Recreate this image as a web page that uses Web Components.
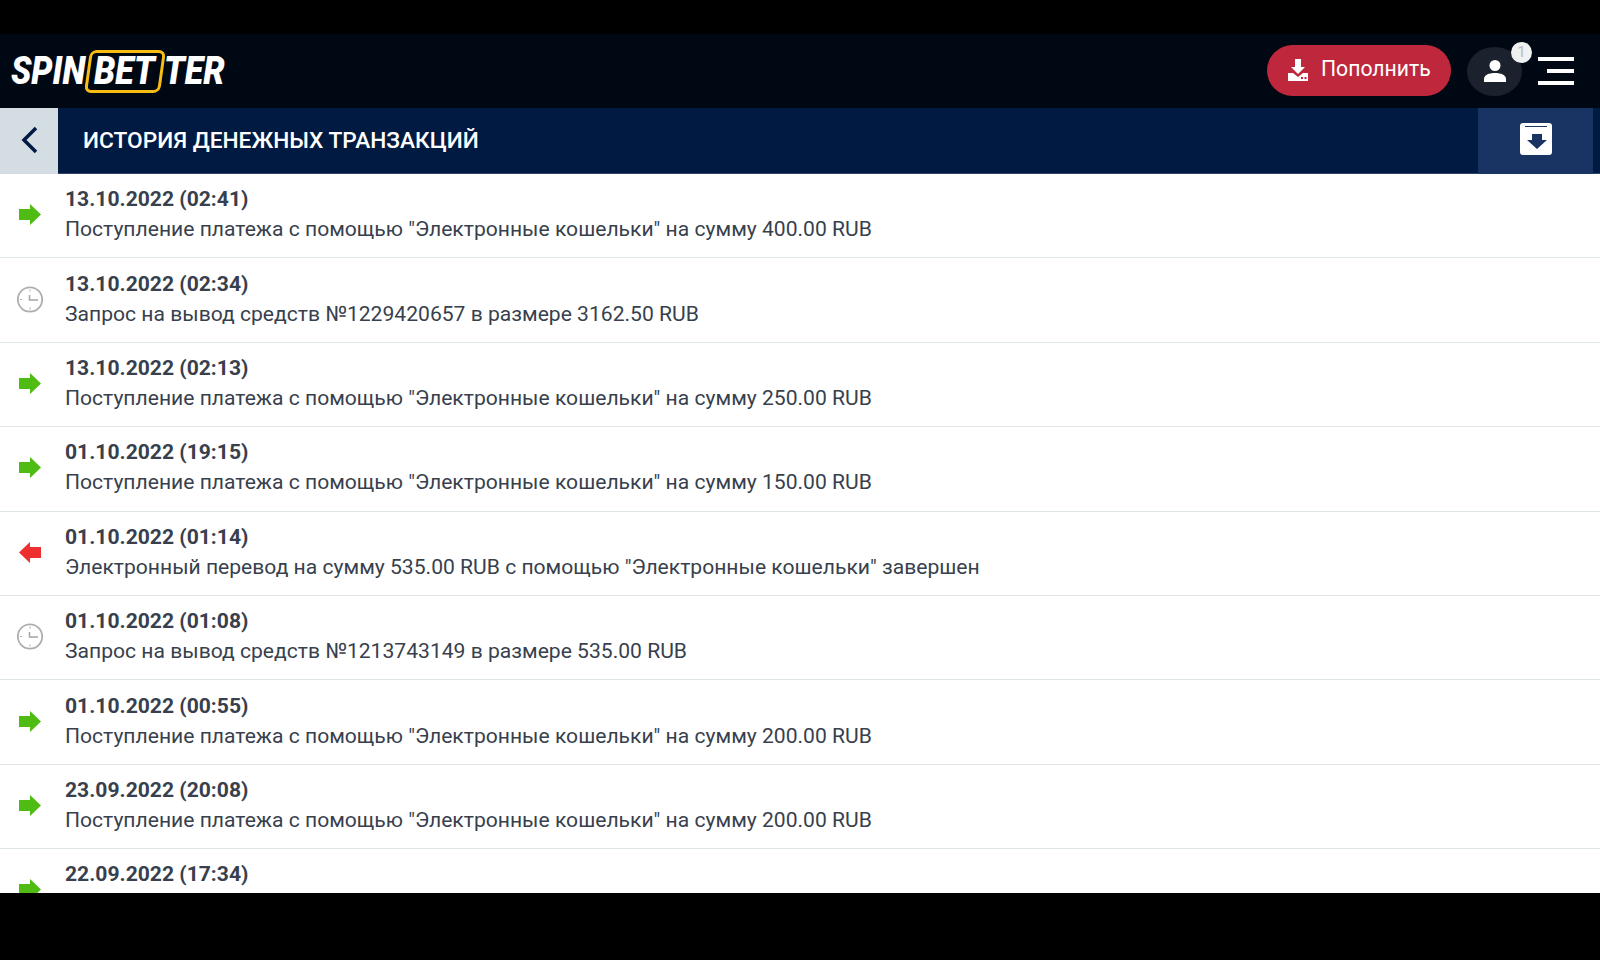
<!DOCTYPE html>
<html lang="ru">
<head>
<meta charset="utf-8">
<title>История</title>
<style>
  html, body { margin: 0; height: 960px; background: #000; overflow: hidden; }
  body { display: flex; flex-direction: column; padding-top: 34px; box-sizing: border-box; font-family: Roboto, "Liberation Sans", sans-serif; }
</style>
</head>
<body>
  <top-bar></top-bar>
  <title-bar>ИСТОРИЯ ДЕНЕЖНЫХ ТРАНЗАКЦИЙ</title-bar>
  <tx-list>
    <tx-row kind="in" date="13.10.2022 (02:41)">Поступление платежа с помощью "Электронные кошельки" на сумму 400.00 RUB</tx-row>
    <tx-row kind="wait" date="13.10.2022 (02:34)">Запрос на вывод средств №1229420657 в размере 3162.50 RUB</tx-row>
    <tx-row kind="in" date="13.10.2022 (02:13)">Поступление платежа с помощью "Электронные кошельки" на сумму 250.00 RUB</tx-row>
    <tx-row kind="in" date="01.10.2022 (19:15)">Поступление платежа с помощью "Электронные кошельки" на сумму 150.00 RUB</tx-row>
    <tx-row kind="out" date="01.10.2022 (01:14)">Электронный перевод на сумму 535.00 RUB с помощью "Электронные кошельки" завершен</tx-row>
    <tx-row kind="wait" date="01.10.2022 (01:08)">Запрос на вывод средств №1213743149 в размере 535.00 RUB</tx-row>
    <tx-row kind="in" date="01.10.2022 (00:55)">Поступление платежа с помощью "Электронные кошельки" на сумму 200.00 RUB</tx-row>
    <tx-row kind="in" date="23.09.2022 (20:08)">Поступление платежа с помощью "Электронные кошельки" на сумму 200.00 RUB</tx-row>
    <tx-row kind="in" date="22.09.2022 (17:34)"></tx-row>
  </tx-list>

<script>
// шапка: логотип, кнопка пополнения, профиль, меню
class TopBar extends HTMLElement {
  constructor() {
    super();
    this.attachShadow({ mode: 'open' });
    this.shadowRoot.innerHTML = `
      <style>
        :host { display: flex; align-items: center; height: 74px; background: #000814; flex: none; }
        .logo { display: flex; align-items: center; width: 224px; color: #fff; font: italic 900 39px/1 Roboto, sans-serif; }
        .logo span { display: block; white-space: nowrap; transform-origin: left center; }
        .spin { flex: none; width: 76px; margin-left: 11px; transform: scaleX(.86); }
        .mid { flex: none; width: 70px; height: 37px; border: 3px solid #f8bd13; border-radius: 7px; transform: skewX(-8deg); display: flex; align-items: center; }
        .mid span { margin-left: 4px; transform: skewX(8deg) scaleX(.87); }
        .ter { flex: none; width: 58px; margin-left: 1px; transform: scaleX(.87); }
        .pay { display: flex; align-items: center; margin: 0 0 1px auto; width: 184px; height: 51px; box-sizing: border-box; padding: 0 0 4px 21px; background: #bf283c; border-radius: 26px; color: #fff; font-size: 21.200px; gap: 13px; }
        .pay svg { margin-top: 2px; }
        .user { position: relative; width: 55px; height: 49px; margin-left: 16px; background: #1b222d; border-radius: 50%; display: flex; align-items: center; justify-content: center; }
        .badge { position: absolute; top: -5px; right: -10px; width: 21px; height: 21px; border-radius: 50%; background: #f0f1f3; color: #b5bac2; font-size: 15px; line-height: 21px; text-align: center; }
        .menu { display: flex; flex-direction: column; align-items: flex-end; gap: 8px; width: 36px; margin: 0 26px 0 16px; }
        .menu i { display: block; height: 4px; background: #fff; width: 36px; }
        .menu i:nth-child(2) { width: 27px; }
      </style>
      <div class="logo"><span class="spin">SPIN</span><div class="mid"><span>BET</span></div><span class="ter">TER</span></div>
      <div class="pay">
        <svg width="20" height="22" viewBox="0 0 20 22"><path fill="#fff" d="M7 0h6v8h4l-7 7-7-7h4z"/><path fill="#fff" d="M0 14h5l5 4 5-4h5v8H0z"/><path fill="#bf283c" d="M13 18h2v2h-2zM16.500 18h2v2h-2z"/></svg>
        Пополнить
      </div>
      <div class="user">
        <svg width="24" height="24" viewBox="0 0 24 24" fill="#fff"><circle cx="12" cy="6.500" r="5.500"/><path d="M1 23v-3c0-4 5-6 11-6s11 2 11 6v3z"/></svg>
        <div class="badge">1</div>
      </div>
      <div class="menu"><i></i><i></i><i></i></div>
    `;
  }
}

// синяя полоса с заголовком
class TitleBar extends HTMLElement {
  constructor() {
    super();
    this.attachShadow({ mode: 'open' });
    this.shadowRoot.innerHTML = `
      <style>
        :host { display: flex; height: 66px; background: #011a42; flex: none; box-shadow: inset 0 -1px 0 #2f4468; }
        .back { width: 58px; background: #d3dde2; display: flex; align-items: center; justify-content: center; }
        .title { flex: 1; align-self: center; margin: 0 0 2px 25px; color: #fff; font-size: 22.700px; font-weight: 500; }
        .archive { width: 115px; margin-right: 7px; background: #193363; display: flex; align-items: center; justify-content: center; }
        .archive svg { margin-bottom: 4px; }
        .back svg { margin-bottom: 2px; }
      </style>
      <div class="back">
        <svg width="19" height="28" viewBox="0 0 19 28" fill="none" stroke="#011a42" stroke-width="3.500"><path d="M16 2 4 14l12 12"/></svg>
      </div>
      <div class="title"><slot></slot></div>
      <div class="archive">
        <svg width="32" height="32" viewBox="0 0 32 32"><rect width="32" height="32" rx="3" fill="#fff"/><path fill="#193363" d="M5 3h22v1H5zM12 11h10v6h5l-10 9-10-9h5z"/></svg>
      </div>
    `;
  }
}

class TxList extends HTMLElement {
  constructor() {
    super();
    this.attachShadow({ mode: 'open' });
    this.shadowRoot.innerHTML = `
      <style>
        :host { display: block; height: 719px; background: #fff; overflow: hidden; flex: none; }
      </style>
      <slot></slot>
    `;
  }
}

const TX_ICONS = {
  in: `<svg width="22" height="21" viewBox="0 0 22 21"><path fill="#4fbc13" d="M0 5h11V0l11 10.500L11 21v-5H0z"/></svg>`,
  out: `<svg width="22" height="21" viewBox="0 0 22 21"><path fill="#ee2f2f" d="M22 5H11V0L0 10.500 11 21v-5h11z"/></svg>`,
  wait: `<svg width="27" height="27" viewBox="0 0 27 27" fill="none" stroke="#aeaeae"><circle cx="13" cy="13.500" r="12.200" stroke-width="1.800"/><path stroke="#a4a4a4" stroke-width="1.500" d="M12.500 9v5h8.500"/><path stroke-width="1" d="M13 3.500v2M13 21.500v2M3 13.500h2"/></svg>`
};

class TxRow extends HTMLElement {
  constructor() {
    super();
    this.attachShadow({ mode: 'open' });
    this.shadowRoot.innerHTML = `
      <style>
        :host { display: flex; align-items: center; height: 84.400px; box-sizing: border-box; border-bottom: 1px solid #dfe6ea; color: #383f4d; }
        .icon { flex: none; height: 30px; display: flex; align-items: center; justify-content: center; width: 60px; margin: 0 5px 2px 0; }
        .body { margin-bottom: 3px; }
        .date { font-size: 21.100px; font-weight: 700; line-height: 30px; }
        .text { font-size: 21.100px; line-height: 30px; min-height: 30px; }
      </style>
      <div class="icon"></div>
      <div class="body">
        <div class="date"></div>
        <div class="text"><slot></slot></div>
      </div>
    `;
  }
  connectedCallback() {
    this.shadowRoot.querySelector('.icon').innerHTML = TX_ICONS[this.getAttribute('kind')] || '';
    this.shadowRoot.querySelector('.date').textContent = this.getAttribute('date') || '';
  }
}

customElements.define('top-bar', TopBar);
customElements.define('title-bar', TitleBar);
customElements.define('tx-list', TxList);
customElements.define('tx-row', TxRow);
</script>
</body>
</html>
